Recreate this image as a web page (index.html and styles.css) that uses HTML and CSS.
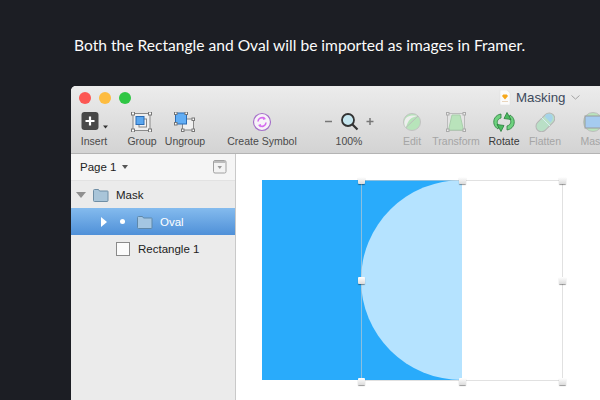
FILE: index.html
```html
<!DOCTYPE html>
<html lang="en">
<head>
<meta charset="utf-8">
<title>Masking</title>
<link rel="stylesheet" href="styles.css">
</head>
<body>
<p class="caption">Both the Rectangle and Oval will be imported as images in Framer.</p>
<div class="window">
  <header class="chrome">
    <div class="titlebar">
      <span class="light red"></span><span class="light yellow"></span><span class="light green"></span>
      <div class="doc">
        <svg class="doc-icon" width="12" height="15" viewBox="0 0 12 15"><path d="M1 0h7l3 3v12H1z" fill="#fbfbfb" stroke="#ddd" stroke-width=".5"/><path d="M3 6l1.2-1.6h3.6L9 6l-3 3.6z" fill="#f6a81c"/><path d="M3 11h6v.8H3z" fill="#e3c9a8"/></svg>
        <span class="doc-name">Masking</span>
        <svg class="doc-chev" width="9" height="5" viewBox="0 0 9 5"><path d="M.5.5l4 3.6 4-3.6" fill="none" stroke="#a3a3a3"/></svg>
      </div>
    </div>
    <div class="tools">
      <div class="tool t-insert">
        <svg width="32" height="20" viewBox="0 0 32 20"><rect x="0.5" y="0" width="17" height="18" rx="3" fill="#484848"/><path d="M9 4.5v9M4.5 9h9" stroke="#fff" stroke-width="2.2"/><path d="M22 13.5h5l-2.5 3z" fill="#333"/></svg>
        <span>Insert</span>
      </div>
      <div class="tool t-group">
        <svg width="22" height="20" viewBox="0 0 22 20"><rect x="2" y="1.5" width="17" height="17" fill="#eee" stroke="#8a8a8a"/><rect x="8" y="7" width="7.500" height="8" fill="#f3f3f3" stroke="#888"/><rect x="5" y="4.500" width="8" height="8" fill="#5aa7f0" stroke="#2b6cb5"/><g fill="#fff" stroke="#777"><rect x=".5" y="0" width="3" height="3"/><rect x="17.500" y="0" width="3" height="3"/><rect x=".5" y="17" width="3" height="3"/><rect x="17.500" y="17" width="3" height="3"/></g></svg>
        <span>Group</span>
      </div>
      <div class="tool t-ungroup">
        <svg width="22" height="20" viewBox="0 0 22 20"><rect x="8.500" y="7" width="11" height="11" fill="#f0f0f0" stroke="#888"/><rect x="1.500" y="1" width="11" height="11" fill="#62aef5" stroke="#2b6cb5"/><g fill="#fff" stroke="#777"><rect x=".5" y="0" width="2.500" height="2.500"/><rect x="11" y="0" width="2.500" height="2.500"/><rect x=".5" y="10.500" width="2.500" height="2.500"/><rect x="18" y="6" width="2.500" height="2.500"/><rect x="7.500" y="17" width="2.500" height="2.500"/><rect x="18" y="17" width="2.500" height="2.500"/></g></svg>
        <span>Ungroup</span>
      </div>
      <div class="tool t-symbol">
        <svg width="20" height="20" viewBox="0 0 20 20"><circle cx="10" cy="10" r="8.500" fill="#f7f3f8" stroke="#a570c9" stroke-width="1.200"/><path d="M6 9.500a4 4 0 0 1 6.500-3M14 10.500a4 4 0 0 1-6.500 3" fill="none" stroke="#d66bf0" stroke-width="1.600"/><path d="M11.500 4.500l2.500 2.500-3 1zM8.500 15.500L6 13l3-1z" fill="#d66bf0"/></svg>
        <span>Create Symbol</span>
      </div>
      <div class="tool t-zoom">
        <svg width="52" height="20" viewBox="0 0 52 20"><path d="M2 9.500h7M43.500 9.500h7M47 6v7" stroke="#777" stroke-width="1.500"/><circle cx="25" cy="8" r="6" fill="#c6e6ef" stroke="#333" stroke-width="1.800"/><path d="M29.500 12.500l5 5" stroke="#333" stroke-width="2.200"/></svg>
        <span>100%</span>
      </div>
      <div class="tool off t-edit">
        <svg width="20" height="20" viewBox="0 0 20 20"><circle cx="10" cy="10" r="8.500" fill="#b7e4ba" stroke="#c2c2c2"/><path d="M4 15.500C6 8 9 5 16 4 16 4 8 2 4 6 1.500 9 2 13 4 15.500z" fill="#eee"/><path d="M4 15.500L16 4" stroke="#bbb"/></svg>
        <span>Edit</span>
      </div>
      <div class="tool off t-transform">
        <svg width="20" height="20" viewBox="0 0 20 20"><rect x="1.500" y="1.500" width="17" height="17" fill="#e4e4e4" stroke="#bbb"/><path d="M6 3h8l3.500 15h-15z" fill="#b9e3bb" stroke="#a9cfac"/><g fill="#eee" stroke="#aaa"><rect x=".5" y=".5" width="2.500" height="2.500"/><rect x="17" y=".5" width="2.500" height="2.500"/><rect x=".5" y="17" width="2.500" height="2.500"/><rect x="17" y="17" width="2.500" height="2.500"/></g></svg>
        <span>Transform</span>
      </div>
      <div class="tool t-rotate">
        <svg width="24" height="20" viewBox="0 0 24 20"><path d="M9 2C3 3 1 8 2 12c.5 2 2 4 4 5l1-3c-3-3-2-7 2-8z" fill="#6fd27f" stroke="#2c7d3f" stroke-width=".8"/><path d="M5 12.500l7 1-3 6z" fill="#4cbb60" stroke="#2c7d3f" stroke-width=".8"/><path d="M15 18c6-1 8-6 7-10-.5-2-2-4-4-5l-1 3c3 3 2 7-2 8z" fill="#6fd27f" stroke="#2c7d3f" stroke-width=".8"/><path d="M19 7.500l-7-1 3-6z" fill="#4cbb60" stroke="#2c7d3f" stroke-width=".8"/></svg>
        <span>Rotate</span>
      </div>
      <div class="tool off t-flatten">
        <svg width="20" height="20" viewBox="0 0 20 20"><rect x="-1" y="5" width="22" height="11" rx="5.500" transform="rotate(-45 10 10)" fill="#b9dfc6" stroke="#b5b5b5"/><path d="M6 5l9 9" stroke="#d8eef0"/><path d="M10.500 2.800c3-2 7-1 7 1.500.8 2.500-.3 4.500-2 6.200L10 5z" fill="#a5d3ea"/></svg>
        <span>Flatten</span>
      </div>
      <div class="tool off t-mask">
        <svg width="22" height="20" viewBox="0 0 22 20"><circle cx="11" cy="10" r="9.500" fill="#b9e3bb" stroke="#bdbdbd"/><rect x="3" y="4" width="16" height="12" fill="#a5cbef" stroke="#9a9a9a"/></svg>
        <span>Mask</span>
      </div>
    </div>
  </header>
  <div class="body">
    <aside class="sidebar">
      <div class="page-row">
        <span class="page-name">Page 1</span>
        <span class="caret"></span>
        <svg class="page-toggle" width="14" height="14" viewBox="0 0 14 14"><rect x=".5" y=".5" width="12.500" height="12.500" rx="1.500" fill="#f3f3f3" stroke="#a0a0a0"/><path d="M1 1h11.500v2H1z" fill="#bbb"/><path d="M4.500 6h4.500l-2.200 3z" fill="#999"/></svg>
      </div>
      <div class="layer layer-mask">
        <span class="tri-down"></span>
        <svg width="16" height="14" viewBox="0 0 16 14"><path d="M.5 2.500a1 1 0 0 1 1-1h4l1 1.500h8a.5.500 0 0 1 .5.500v9a1 1 0 0 1-1 1h-12.500a1 1 0 0 1-1-1z" fill="#a9c5d9" stroke="#6f8ea5"/></svg>
        <span class="layer-name">Mask</span>
      </div>
      <div class="layer layer-oval">
        <span class="tri-right"></span>
        <span class="dot"></span>
        <svg width="16" height="14" viewBox="0 0 16 14"><path d="M.5 2.500a1 1 0 0 1 1-1h4l1 1.500h8a.5.500 0 0 1 .5.500v9a1 1 0 0 1-1 1h-12.500a1 1 0 0 1-1-1z" fill="#a4c6e2" stroke="#5f88aa"/></svg>
        <span class="layer-name">Oval</span>
      </div>
      <div class="layer layer-rect">
        <span class="rect-icon"></span>
        <span class="layer-name">Rectangle 1</span>
      </div>
    </aside>
    <main class="canvas">
      <div class="artboard">
        <div class="art-rect"></div>
        <div class="art-oval"></div>
        <div class="selection">
          <span class="handle h-tl"></span><span class="handle h-tc"></span><span class="handle h-tr"></span>
          <span class="handle h-ml"></span><span class="handle h-mr"></span>
          <span class="handle h-bl"></span><span class="handle h-bc"></span><span class="handle h-br"></span>
        </div>
      </div>
    </main>
  </div>
</div>
</body>
</html>
```

FILE: styles.css
```css
html, body {
  margin: 0;
  padding: 0;
  width: 600px;
  height: 400px;
  overflow: hidden;
  background: #1c1e24;
}

.caption {
  margin: 0;
  padding: 36px 0 0 74px;
  height: 86px;
  box-sizing: border-box;
  font: 15.6px/18px "Lato", sans-serif;
  color: #fbfbfb;
  white-space: nowrap;
}

.window {
  margin-left: 71px;
  width: 600px;
  height: 314px;
  display: flex;
  flex-direction: column;
  background: #fff;
  border-radius: 5px 0 0 0;
  overflow: hidden;
  font-family: "Liberation Sans", Arial, sans-serif;
}

.chrome {
  height: 68px;
  box-sizing: border-box;
  border-bottom: 1px solid #b4b4b4;
  background: linear-gradient(#ececec, #d3d3d3);
}

.titlebar {
  display: flex;
  align-items: center;
  height: 22px;
  padding: 1px 0 0 8px;
  box-sizing: border-box;
  gap: 8px;
}

.light {
  width: 12px;
  height: 12px;
  border-radius: 50%;
}
.red { background: #fc5753; }
.yellow { background: #fdbc40; }
.green { background: #2fc644; }

.doc {
  display: flex;
  align-items: center;
  margin-left: 360px;
}
.doc-icon { margin-right: 5px; }
.doc-name {
  font-size: 13.3px;
  color: #3d4a5c;
  margin-right: 5px;
}

.tools {
  display: flex;
  padding-top: 4px;
}

.tool {
  flex: none;
  display: flex;
  flex-direction: column;
  align-items: center;
  gap: 3px;
  font-size: 10.5px;
  line-height: 12px;
  color: #4a4a4a;
  white-space: nowrap;
}
.tool svg { display: block; }
.tool.off { color: #a5a5a5; }

.t-insert { width: 40px; margin-left: 3px; }
.t-insert svg { margin-left: 6px; }
.t-group { width: 44px; margin-left: 6px; }
.t-ungroup { width: 42px; }
.t-symbol { width: 80px; margin-left: 16px; }
.t-zoom { width: 54px; margin-left: 20px; }
.t-edit { width: 36px; margin-left: 18px; }
.t-transform { width: 52px; }
.t-rotate { width: 44px; color: #3a3a3a; }
.t-flatten { width: 38px; }
.t-mask { width: 52px; margin-left: 3px; }

.body {
  flex: 1;
  display: flex;
  min-height: 0;
}

.sidebar {
  flex: none;
  width: 165px;
  box-sizing: border-box;
  background: #ebebeb;
  border-right: 1px solid #c9c9c9;
  font-size: 11.5px;
  color: #222;
}

.page-row {
  height: 27px;
  display: flex;
  align-items: center;
  padding: 0 8px 0 9px;
  background: #f5f5f5;
  border-bottom: 1px solid #e2e2e2;
  box-sizing: border-box;
}
.page-name { margin-right: 6px; }
.caret {
  border-left: 3px solid transparent;
  border-right: 3px solid transparent;
  border-top: 4px solid #555;
}
.page-toggle { margin-left: auto; }

.layer {
  display: flex;
  align-items: center;
  height: 27px;
  box-sizing: border-box;
}

.layer-mask { padding-left: 5px; }
.tri-down {
  border-left: 5px solid transparent;
  border-right: 5px solid transparent;
  border-top: 6px solid #8f8f8f;
  margin-right: 7px;
}
.layer-mask .layer-name { margin-left: 7px; }

.layer-oval {
  padding-left: 30px;
  background: linear-gradient(#84bbee, #4f90d8);
  color: #fff;
}
.tri-right {
  border-top: 5.500px solid transparent;
  border-bottom: 5.500px solid transparent;
  border-left: 6px solid #fff;
  margin-right: 13px;
}
.dot {
  width: 5px;
  height: 5px;
  border-radius: 50%;
  background: #fff;
  margin-right: 12px;
}
.layer-oval .layer-name { margin-left: 7px; }

.layer-rect { padding-left: 45px; }
.rect-icon {
  width: 12px;
  height: 12px;
  background: #fbfbfb;
  border: 1px solid #8a8a8a;
  margin-right: 8px;
}

.canvas {
  flex: 1;
  background: #fff;
  padding: 26px 0 0 26px;
}

.artboard {
  position: relative;
  width: 300px;
  height: 200px;
}

.art-rect {
  width: 200px;
  height: 200px;
  background: #29abfb;
}

.art-oval {
  position: absolute;
  left: 99px;
  top: 0;
  width: 101px;
  height: 200px;
  background: #b5e3ff;
  border-radius: 101px 0 0 101px / 100px 0 0 100px;
}

.selection {
  position: absolute;
  left: 99px;
  top: 0;
  width: 200px;
  height: 199px;
  border: 1px solid rgba(205, 205, 205, 0.6);
}

.handle {
  position: absolute;
  width: 7px;
  height: 7px;
  border-radius: 1px;
  background: linear-gradient(#fff, #dcdcdc);
  box-shadow: 0 1px 1px rgba(0, 0, 0, 0.4);
}
.h-tl { left: -4px; top: -4px; }
.h-tc { left: 97px; top: -4px; }
.h-tr { left: 197px; top: -4px; }
.h-ml { left: -4px; top: 96px; }
.h-mr { left: 197px; top: 96px; }
.h-bl { left: -4px; top: 197px; }
.h-bc { left: 97px; top: 197px; }
.h-br { left: 197px; top: 197px; }
```
